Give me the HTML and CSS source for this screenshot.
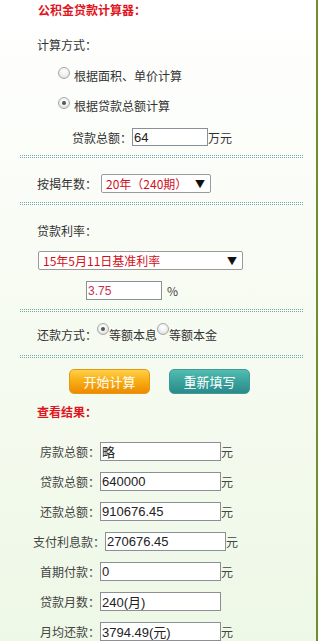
FILE: index.html
```html
<!DOCTYPE html>
<html lang="zh-CN">
<head>
<meta charset="utf-8">
<title>公积金贷款计算器</title>
<link rel="stylesheet" href="styles.css">
</head>
<body>
<div class="page">
  <div class="title">公积金贷款计算器：</div>
  <div class="label-line mt15">计算方式：</div>
  <label class="radio-line mt8"><input type="radio" name="mode" class="rb"><span>根据面积、单价计算</span></label>
  <label class="radio-line mt10"><input type="radio" name="mode" class="rb" checked><span>根据贷款总额计算</span></label>
  <div class="amount-line mt14"><span>贷款总额：</span><input class="txt amount" value="64"><span>万元</span></div>
  <div class="dots mt8"></div>
  <div class="years-line mt15"><span>按揭年数：</span><div class="sel years"><span>20年（240期）</span><span class="arrow">▼</span></div></div>
  <div class="dots mt9"></div>
  <div class="label-line mt16">贷款利率：</div>
  <div class="sel rate mt10"><span>15年5月11日基准利率</span><span class="arrow">▼</span></div>
  <div class="rate-line mt11"><input class="txt rate-val" value="3.75"><span class="pct">%</span></div>
  <div class="dots mt9"></div>
  <div class="pay-line mt12"><span>还款方式：</span><input type="radio" name="pay" class="rb up" checked><span>等额本息</span><input type="radio" name="pay" class="rb up"><span>等额本金</span></div>
  <div class="dots mt11"></div>
  <div class="buttons mt11"><button class="btn orange">开始计算</button><button class="btn teal">重新填写</button></div>
  <div class="title sub mt8">查看结果：</div>
  <div class="results">
    <div class="res"><span class="lab">房款总额：</span><input class="txt out" value="略"><span>元</span></div>
    <div class="res"><span class="lab">贷款总额：</span><input class="txt out" value="640000"><span>元</span></div>
    <div class="res"><span class="lab">还款总额：</span><input class="txt out" value="910676.45"><span>元</span></div>
    <div class="res wide"><span class="lab">支付利息款：</span><input class="txt out" value="270676.45"><span>元</span></div>
    <div class="res"><span class="lab">首期付款：</span><input class="txt out" value="0"><span>元</span></div>
    <div class="res"><span class="lab">贷款月数：</span><input class="txt out" value="240(月)"></div>
    <div class="res"><span class="lab">月均还款：</span><input class="txt out" value="3794.49(元)"><span>元</span></div>
  </div>
</div>
</body>
</html>
```
FILE: styles.css
```css
html, body {
  margin: 0;
  padding: 0;
}
body {
  width: 319px;
  height: 641px;
  overflow: hidden;
  font-family: "Noto Sans CJK SC", "Liberation Sans", sans-serif;
  font-size: 12px;
  color: #333;
}
.page {
  width: 316px;
  height: 641px;
  border-right: 2px solid #6f8f2e;
  background: linear-gradient(to bottom, #ffffff 0%, #f8fcf4 40%, #eef8e6 100%);
  box-sizing: content-box;
  overflow: hidden;
}
.mt8 { margin-top: 8px; }
.mt9 { margin-top: 9px; }
.mt10 { margin-top: 10px; }
.mt11 { margin-top: 11px; }
.mt12 { margin-top: 12px; }
.mt14 { margin-top: 14px; }
.mt15 { margin-top: 15px; }
.mt16 { margin-top: 16px; }

.title {
  height: 20px;
  line-height: 20px;
  padding-left: 38px;
  color: #e0141e;
  font-weight: bold;
  font-size: 12px;
}
.title.sub {
  padding-left: 37px;
}
.label-line {
  height: 20px;
  line-height: 20px;
  padding-left: 37px;
}
.radio-line {
  display: flex;
  align-items: center;
  height: 20px;
  padding-left: 58px;
}
.radio-line span {
  margin-left: 4px;
  padding-top: 4px;
}
.rb {
  -webkit-appearance: none;
  appearance: none;
  margin: 0;
  width: 12px;
  height: 12px;
  border-radius: 50%;
  border: 1px solid #a8a8a8;
  background: radial-gradient(circle at 50% 35%, #ffffff 0%, #f0f0f0 50%, #d0d0d0 100%);
  box-sizing: border-box;
  position: relative;
  flex: none;
}
.rb:checked::after {
  content: "";
  position: absolute;
  left: 3px;
  top: 3px;
  width: 4px;
  height: 4px;
  border-radius: 50%;
  background: #555;
}
.amount-line {
  display: flex;
  align-items: center;
  height: 20px;
  padding-left: 72px;
}
.txt {
  font-family: "Liberation Sans", "Noto Sans CJK SC", sans-serif;
  font-size: 13px;
  color: #222;
  border: 1px solid #8a9098;
  background: #fff;
  height: 18px;
  box-sizing: border-box;
  padding: 0 1px;
  margin: 0;
  outline: none;
}
.amount {
  width: 76px;
}
.dots {
  margin-left: 20px;
  width: 283px;
  height: 1px;
  border-top: 1px dotted #79a8a8;
  border-bottom: 1px dotted #79a8a8;
}
.years-line {
  display: flex;
  align-items: center;
  height: 20px;
  padding-left: 37px;
}
.sel {
  display: flex;
  align-items: center;
  justify-content: space-between;
  height: 19px;
  box-sizing: border-box;
  border: 1px solid #9a9a9a;
  border-radius: 2px;
  background: #fff;
  color: #d0101c;
  font-size: 12px;
  padding: 0 5px 0 4px;
}
.sel .arrow {
  color: #111;
  font-size: 10px;
}
.years {
  width: 110px;
  margin-left: 4px;
}
.rate {
  width: 205px;
  margin-left: 38px;
}
.rate-line {
  display: flex;
  align-items: center;
  height: 19px;
  padding-left: 86px;
}
.rate-val {
  width: 76px;
  height: 19px;
  color: #c8304a;
  font-size: 12px;
}
.pct {
  margin-left: 5px;
  color: #444;
}
.pay-line {
  display: flex;
  align-items: center;
  height: 20px;
  padding-left: 37px;
}
.rb.up {
  align-self: flex-start;
  margin-top: -1px;
}
.buttons {
  display: flex;
  padding-left: 69px;
  gap: 19px;
  height: 25px;
}
.btn {
  width: 81px;
  height: 25px;
  border-radius: 5px;
  font-family: "Noto Sans CJK SC", sans-serif;
  font-size: 13px;
  color: #fff;
  padding: 0;
  margin: 0;
}
.orange {
  background: linear-gradient(to bottom, #ffd048 0%, #f8b016 45%, #ee8a00 100%);
  border: 1px solid #e29a10;
}
.teal {
  background: linear-gradient(to bottom, #52bdb0 0%, #3aa39c 50%, #2b8a8c 100%);
  border: 1px solid #3f9a98;
}
.results {
  margin-top: 20px;
  display: flex;
  flex-direction: column;
  gap: 11px;
}
.res {
  display: flex;
  align-items: center;
  height: 19px;
  padding-left: 40px;
  color: #444;
}
.res.wide {
  padding-left: 33px;
}
.out {
  width: 121px;
  height: 19px;
}
```
